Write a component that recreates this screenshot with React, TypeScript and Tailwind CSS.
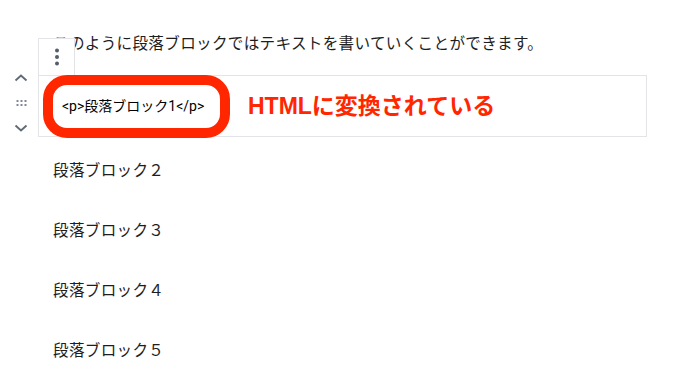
import React from 'react';

const serif = 'font-["Liberation_Serif","Noto_Sans_CJK_JP",serif]';

function ChevronUp() {
  return (
    <svg width="16" height="16" viewBox="0 0 16 16" fill="none">
      <polyline points="2.5,10.5 8,5.5 13.5,10.5" stroke="#5f6b76" strokeWidth="1.9" />
    </svg>
  );
}

function ChevronDown() {
  return (
    <svg width="16" height="16" viewBox="0 0 16 16" fill="none">
      <polyline points="2.5,5.5 8,10.5 13.5,5.5" stroke="#5f6b76" strokeWidth="1.9" />
    </svg>
  );
}

function DragHandle() {
  return (
    <svg width="16" height="16" viewBox="0 0 16 16" fill="#7e8993">
      {[3.5, 7.5, 11.5].map((x) =>
        [5, 9].map((y) => <rect key={`${x}-${y}`} x={x} y={y} width="2" height="2" />)
      )}
    </svg>
  );
}

function Kebab() {
  return (
    <svg width="6" height="18" viewBox="0 0 6 18" fill="#555d66">
      <circle cx="3" cy="2.5" r="2" />
      <circle cx="3" cy="9" r="2" />
      <circle cx="3" cy="15.5" r="2" />
    </svg>
  );
}

export default function App() {
  const rest = ['段落ブロック２', '段落ブロック３', '段落ブロック４', '段落ブロック５'];

  return (
    <div className="relative h-[367px] w-[674px] overflow-hidden bg-white text-[#1e1e1e]">
      <div className="ml-[38px] w-[609px] pt-[32px]">
        {/* first paragraph */}
        <p className={`${serif} pl-[15px] text-[15.6px] leading-[24px] tracking-[0.3px]`}>
          このように段落ブロックではテキストを書いていくことができます。
        </p>

        {/* selected block */}
        <div className="relative mt-[19px] flex h-[62px] items-center border border-[#e2e4e7]">
          <div className="absolute -left-[1px] -top-[38px] flex h-[37px] w-[37px] items-center justify-center border border-b-0 border-[#e2e4e7] bg-white">
            <Kebab />
          </div>

          <div className="absolute -left-[26px] -top-[6px] flex flex-col gap-[9px]">
            <ChevronUp />
            <DragHandle />
            <ChevronDown />
          </div>

          <div className="ml-[4px] flex h-[63px] w-[187px] shrink-0 items-center rounded-[24px] border-[10px] border-[#ff2600] pl-[9px]">
            <span className='font-["Roboto","Noto_Sans_CJK_JP",sans-serif] text-[14px] leading-none text-black'>
              &lt;p&gt;段落ブロック1&lt;/p&gt;
            </span>
          </div>
          <span className='ml-[18px] font-["Liberation_Sans","Noto_Sans_CJK_JP",sans-serif] text-[23px] font-bold leading-none text-[#ff2600]'>
            HTMLに変換されている
          </span>
        </div>

        {rest.map((t, i) => (
          <p
            key={t}
            className={`${serif} pl-[15px] text-[15.6px] leading-[24px] tracking-[0.3px] ${i === 0 ? 'mt-[22px]' : 'mt-[36px]'}`}
          >
            {t}
          </p>
        ))}
      </div>
    </div>
  );
}
